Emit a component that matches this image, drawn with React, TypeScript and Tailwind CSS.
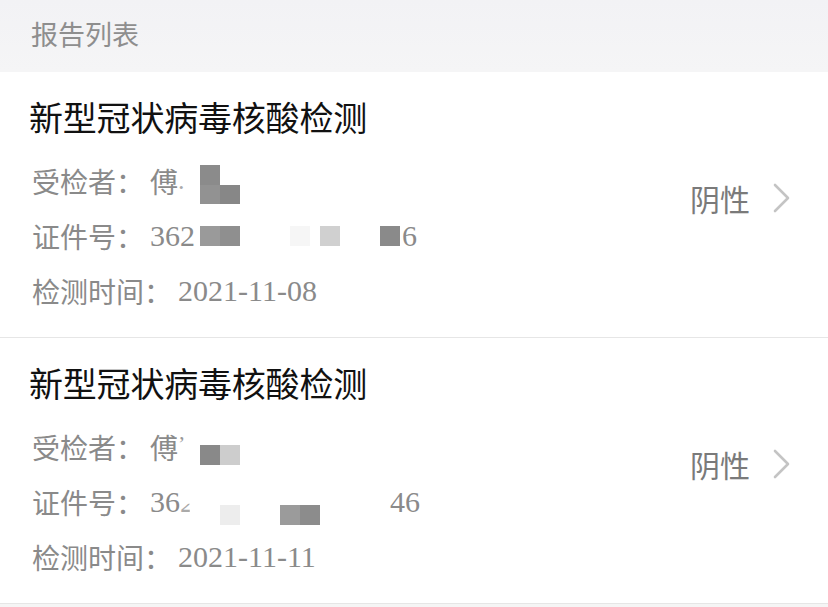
import React from "react";

const CJK = "font-['Noto_Sans_CJK_SC','Noto_Sans',sans-serif]";
const SERIF = "font-['Liberation_Serif','Noto_Serif_CJK_SC',serif]";

function Chevron() {
  return (
    <svg width="20" height="32" viewBox="0 0 20 32" fill="none">
      <path d="M3 3 L16 16 L3 29" stroke="#c4c4c4" strokeWidth="2.6" strokeLinecap="round" strokeLinejoin="round" />
    </svg>
  );
}

function Label({ children }: { children: React.ReactNode }) {
  return <span className={`${CJK} text-[28px] text-[#8a8a8a] whitespace-nowrap mr-[6px]`}>{children}</span>;
}

function Card({ rows }: { rows: React.ReactNode[] }) {
  return (
    <div className="flex bg-white border-b border-[#e6e6e6] h-[266px] pt-[17px]">
      <div className="flex-1 flex flex-col">
        <div className={`${CJK} text-[34px] leading-[56px] text-[#111] pl-[29px] tracking-[-0.2px]`}>新型冠状病毒核酸检测</div>
        <div className="mt-[8px] flex flex-col">
          {rows.map((r, i) => (
            <div key={i} className="h-[55px] flex items-center pl-[32px] whitespace-nowrap">
              {r}
            </div>
          ))}
        </div>
      </div>
      <div className="flex items-center gap-[22px] pr-[36px] pb-[30px]">
        <span className={`${CJK} text-[30px] text-[#7a7a7a]`}>阴性</span>
        <Chevron />
      </div>
    </div>
  );
}

export default function App() {
  const card1 = [
    <>
      <Label>受检者：</Label>
      <span className={`${CJK} text-[28px] text-[#8a8a8a]`}>傅</span>
      <span className={`${SERIF} text-[26px] text-[#aaa]`}>.</span>
      <span className="flex flex-col ml-[15px] mt-[8px]">
        <span className="flex">
          <span className="w-[20px] h-[20px] bg-[#8b8b8b]" />
        </span>
        <span className="flex">
          <span className="w-[20px] h-[19px] bg-[#929292]" />
          <span className="w-[20px] h-[19px] bg-[#878787]" />
        </span>
      </span>
    </>,
    <>
      <Label>证件号：</Label>
      <span className={`${SERIF} text-[30px] text-[#8a8a8a]`}>362</span>
      <span className="flex ml-[5px] mt-[1px]">
        <span className="w-[20px] h-[20px] bg-[#9a9a9a]" />
        <span className="w-[20px] h-[20px] bg-[#8f8f8f]" />
        <span className="w-[20px] h-[20px] ml-[50px] bg-[#f6f6f6]" />
        <span className="w-[20px] h-[20px] ml-[10px] bg-[#d0d0d0]" />
        <span className="w-[20px] h-[20px] ml-[40px] bg-[#8a8a8a]" />
      </span>
      <span className={`${SERIF} text-[30px] text-[#8a8a8a] ml-[2px]`}>6</span>
    </>,
    <>
      <Label>检测时间：</Label>
      <span className={`${SERIF} text-[30px] text-[#8a8a8a]`}>2021-11-08</span>
    </>,
  ];
  const card2 = [
    <>
      <Label>受检者：</Label>
      <span className={`${CJK} text-[28px] text-[#8a8a8a]`}>傅</span>
      <span className={`${SERIF} text-[22px] text-[#999] self-start mt-[8px]`}>’</span>
      <span className="flex ml-[15px] mt-[17px]">
        <span className="w-[20px] h-[20px] bg-[#898989]" />
        <span className="w-[20px] h-[20px] bg-[#cdcdcd]" />
      </span>
    </>,
    <>
      <Label>证件号：</Label>
      <span className={`${SERIF} text-[30px] text-[#8a8a8a]`}>36</span>
      <span className={`${SERIF} text-[30px] text-[#aaa] [clip-path:inset(55%_35%_0_0)]`}>2</span>
      <span className="flex ml-[25px] mt-[27px]">
        <span className="w-[20px] h-[20px] bg-[#ededed]" />
        <span className="w-[20px] h-[20px] ml-[40px] bg-[#9b9b9b]" />
        <span className="w-[20px] h-[20px] bg-[#8c8c8c]" />
      </span>
      <span className={`${SERIF} text-[30px] text-[#8a8a8a] ml-[70px]`}>46</span>
    </>,
    <>
      <Label>检测时间：</Label>
      <span className={`${SERIF} text-[30px] text-[#8a8a8a]`}>2021-11-11</span>
    </>,
  ];
  return (
    <div className="w-[828px] h-[607px] overflow-hidden bg-[#f5f5f5] flex flex-col">
      <div className="h-[72px] shrink-0 bg-gradient-to-b from-[#f2f2f5] to-[#f5f5f6] flex items-center pl-[31px] pb-[4px]">
        <span className={`${CJK} text-[27px] text-[#8e8e8e]`}>报告列表</span>
      </div>
      <Card rows={card1} />
      <Card rows={card2} />
    </div>
  );
}
